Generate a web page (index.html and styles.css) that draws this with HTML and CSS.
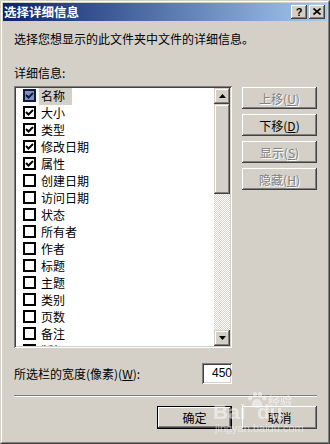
FILE: index.html
```html
<!DOCTYPE html>
<html lang="zh-CN">
<head>
<meta charset="utf-8">
<title>选择详细信息</title>
<link rel="stylesheet" href="styles.css">
</head>
<body>
<div class="window">
  <div class="frame">
    <div class="titlebar">
      <span class="title">选择详细信息</span>
      <div class="tbtns">
        <span class="tbtn q">?</span>
        <span class="tbtn"><svg width="8" height="7" viewBox="0 0 8 7"><path d="M0.5 0.5 L7.5 6.5 M7.5 0.5 L0.5 6.5" stroke="#000" stroke-width="1.6" fill="none"/></svg></span>
      </div>
    </div>
    <div class="body">
      <p class="desc">选择您想显示的此文件夹中文件的详细信息。</p>
      <p class="label">详细信息:</p>
      <div class="main">
        <div class="list">
          <ul class="items">
            <li class="item sel"><span class="cb on"><svg width="9" height="9" viewBox="0 0 9 9"><path d="M1 4 L3.5 6.5 L8 2" stroke="currentColor" stroke-width="2" fill="none"/></svg></span><span class="txt">名称</span></li>
            <li class="item"><span class="cb on"><svg width="9" height="9" viewBox="0 0 9 9"><path d="M1 4 L3.5 6.5 L8 2" stroke="currentColor" stroke-width="2" fill="none"/></svg></span><span class="txt">大小</span></li>
            <li class="item"><span class="cb on"><svg width="9" height="9" viewBox="0 0 9 9"><path d="M1 4 L3.5 6.5 L8 2" stroke="currentColor" stroke-width="2" fill="none"/></svg></span><span class="txt">类型</span></li>
            <li class="item"><span class="cb on"><svg width="9" height="9" viewBox="0 0 9 9"><path d="M1 4 L3.5 6.5 L8 2" stroke="currentColor" stroke-width="2" fill="none"/></svg></span><span class="txt">修改日期</span></li>
            <li class="item"><span class="cb on"><svg width="9" height="9" viewBox="0 0 9 9"><path d="M1 4 L3.5 6.5 L8 2" stroke="currentColor" stroke-width="2" fill="none"/></svg></span><span class="txt">属性</span></li>
            <li class="item"><span class="cb"></span><span class="txt">创建日期</span></li>
            <li class="item"><span class="cb"></span><span class="txt">访问日期</span></li>
            <li class="item"><span class="cb"></span><span class="txt">状态</span></li>
            <li class="item"><span class="cb"></span><span class="txt">所有者</span></li>
            <li class="item"><span class="cb"></span><span class="txt">作者</span></li>
            <li class="item"><span class="cb"></span><span class="txt">标题</span></li>
            <li class="item"><span class="cb"></span><span class="txt">主题</span></li>
            <li class="item"><span class="cb"></span><span class="txt">类别</span></li>
            <li class="item"><span class="cb"></span><span class="txt">页数</span></li>
            <li class="item"><span class="cb"></span><span class="txt">备注</span></li>
            <li class="item"><span class="cb"></span><span class="txt">版权</span></li>
          </ul>
          <div class="scroll">
            <div class="sbtn"><svg width="7" height="4" viewBox="0 0 7 4"><path d="M3.5 0 L7 4 L0 4 Z" fill="#000"/></svg></div>
            <div class="thumb"></div>
            <div class="track"></div>
            <div class="sbtn"><svg width="7" height="4" viewBox="0 0 7 4"><path d="M0 0 L7 0 L3.5 4 Z" fill="#000"/></svg></div>
          </div>
        </div>
        <div class="side">
          <div class="btn dis">上移(<u>U</u>)</div>
          <div class="btn">下移(<u>D</u>)</div>
          <div class="btn dis">显示(<u>S</u>)</div>
          <div class="btn dis">隐藏(<u>H</u>)</div>
        </div>
      </div>
      <div class="wrow">
        <span>所选栏的宽度(像素)(<u>W</u>):</span>
        <div class="input">450</div>
      </div>
      <div class="sep"></div>
      <div class="actions">
        <div class="btn def">确定</div>
        <div class="btn">取消</div>
      </div>
    </div>
  </div>
  <div class="watermark">
    <span class="wm-big">Bai</span>
    <svg class="wm-paw" width="22" height="16" viewBox="0 0 22 16"><ellipse cx="4" cy="6" rx="2.2" ry="2.6" fill="#fff"/><ellipse cx="9" cy="2.6" rx="2.2" ry="2.6" fill="#fff"/><ellipse cx="14" cy="2.6" rx="2.2" ry="2.6" fill="#fff"/><ellipse cx="18.5" cy="6" rx="2.2" ry="2.6" fill="#fff"/><path d="M11 7 C7 7 5 12 6 14.5 C7 16 15 16 16 14.5 C17 12 15 7 11 7 Z" fill="#fff"/></svg>
    <span class="wm-big wm-du">du</span>
    <span class="wm-cn">经验</span>
    <span class="wm-url">jingyan.baidu.com</span>
  </div>
</div>
</body>
</html>
```

FILE: styles.css
```css
* { box-sizing: border-box; }
html, body { margin: 0; padding: 0; }
body {
  width: 330px;
  height: 444px;
  overflow: hidden;
  background: #d4d0c8;
  font: 12px/14px "Noto Sans CJK SC", "Liberation Sans", sans-serif;
  color: #000;
}
u { text-decoration: underline; text-underline-offset: 1px; }

.window {
  position: relative;
  width: 330px;
  height: 444px;
  border: 1px solid;
  border-color: #d4d0c8 #404040 #404040 #d4d0c8;
  background: #d4d0c8;
}
.frame {
  height: 100%;
  border: 1px solid;
  border-color: #fff #808080 #808080 #fff;
  padding: 1px;
  display: flex;
  flex-direction: column;
}

.titlebar {
  height: 18px;
  flex: none;
  background: linear-gradient(to right, #0a246a, #a6caf0);
  display: flex;
  align-items: center;
  justify-content: space-between;
  padding: 0 2px 0 1px;
}
.title {
  color: #fff;
  font-weight: bold;
  font-size: 12.5px;
  line-height: 14px;
}
.tbtns { display: flex; gap: 2px; }
.tbtn {
  width: 16px;
  height: 14px;
  background: #d4d0c8;
  box-shadow: inset -1px -1px #404040, inset 1px 1px #fff, inset -2px -2px #808080, inset 2px 2px #d4d0c8;
  display: flex;
  align-items: center;
  justify-content: center;
  padding-bottom: 1px;
}
.tbtn.q {
  font: bold 11px/12px "Liberation Sans", sans-serif;
}

.body {
  flex: 1;
  padding: 11px 10px 0 11px;
  display: flex;
  flex-direction: column;
}
.desc { margin: 0; line-height: 13px; }
.label { margin: 21px 0 0; line-height: 13px; }

.main { display: flex; gap: 10px; margin-top: 7px; }
.list {
  width: 218px;
  height: 262px;
  display: flex;
  padding: 2px;
  background: #fff;
  box-shadow: inset 1px 1px #808080, inset -1px -1px #fff, inset 2px 2px #404040, inset -2px -2px #d4d0c8;
}
.items {
  flex: 1;
  list-style: none;
  margin: 0;
  padding: 0;
  overflow: hidden;
}
.item {
  height: 17px;
  display: flex;
  align-items: flex-start;
  padding-left: 7px;
}
.cb {
  flex: none;
  width: 13px;
  height: 13px;
  margin-top: 1px;
  border: 2px solid #000;
  background: #fff;
  color: #000;
  display: flex;
  align-items: center;
  justify-content: center;
}
.item.sel .cb {
  border-color: #0a1a4a;
  background: #8491b4;
  color: #0a1a4a;
}
.txt {
  margin-left: 3px;
  padding: 1px 7px 0 2px;
  height: 17px;
  line-height: 13px;
}
.item.sel .txt { background: #d4d0c8; }

.scroll {
  width: 16px;
  display: flex;
  flex-direction: column;
}
.sbtn, .thumb {
  background: #d4d0c8;
  box-shadow: inset -1px -1px #404040, inset 1px 1px #d4d0c8, inset -2px -2px #808080, inset 2px 2px #fff;
}
.sbtn {
  height: 16px;
  display: flex;
  align-items: center;
  justify-content: center;
}
.thumb { height: 90px; }
.track {
  flex: 1;
  background: repeating-conic-gradient(#d4d0c8 0 25%, #fff 0 50%) 0 0 / 2px 2px;
}

.side {
  width: 75px;
  display: flex;
  flex-direction: column;
  gap: 5px;
  padding-top: 1px;
}
.btn {
  height: 22px;
  background: #d4d0c8;
  box-shadow: inset -1px -1px #404040, inset 1px 1px #fff, inset -2px -2px #808080, inset 2px 2px #d4d0c8;
  display: flex;
  align-items: center;
  justify-content: center;
  line-height: 13px;
}
.btn.dis { color: #808080; text-shadow: 1px 1px 0 #fff; }

.wrow {
  margin-top: 15px;
  padding-right: 85px;
  display: flex;
  align-items: center;
  justify-content: space-between;
}
.input {
  width: 30px;
  height: 21px;
  padding: 3px 0 0 10px;
  background: #fff;
  white-space: nowrap;
  overflow: hidden;
  font: 12px/14px "Liberation Sans", sans-serif;
  box-shadow: inset 1px 1px #808080, inset -1px -1px #fff, inset 2px 2px #404040, inset -2px -2px #d4d0c8;
}

.sep {
  margin-top: 11px;
  height: 2px;
  border-top: 1px solid #808080;
  border-bottom: 1px solid #fff;
}
.actions {
  margin-top: 9px;
  display: flex;
  justify-content: flex-end;
  gap: 10px;
}
.actions .btn { width: 75px; height: 23px; }
.btn.def {
  border: 1px solid #000;
  box-shadow: inset -1px -1px #404040, inset 1px 1px #fff, inset -2px -2px #808080, inset 2px 2px #d4d0c8;
}

.watermark {
  position: absolute;
  left: 212px;
  top: 389px;
  width: 100px;
  height: 44px;
  opacity: 0.5;
  color: #fff;
  pointer-events: none;
}
.wm-big {
  position: absolute;
  top: 11px;
  left: 0;
  font: bold 21px/22px "Liberation Sans", sans-serif;
}
.wm-du { left: 44px; }
.wm-paw { position: absolute; left: 33px; top: 2px; }
.wm-cn {
  position: absolute;
  left: 55px;
  top: 4px;
  font: bold 12px/13px "Noto Sans CJK SC", sans-serif;
}
.wm-url {
  position: absolute;
  left: 2px;
  top: 32px;
  font: 11px/12px "Liberation Sans", sans-serif;
}
```
